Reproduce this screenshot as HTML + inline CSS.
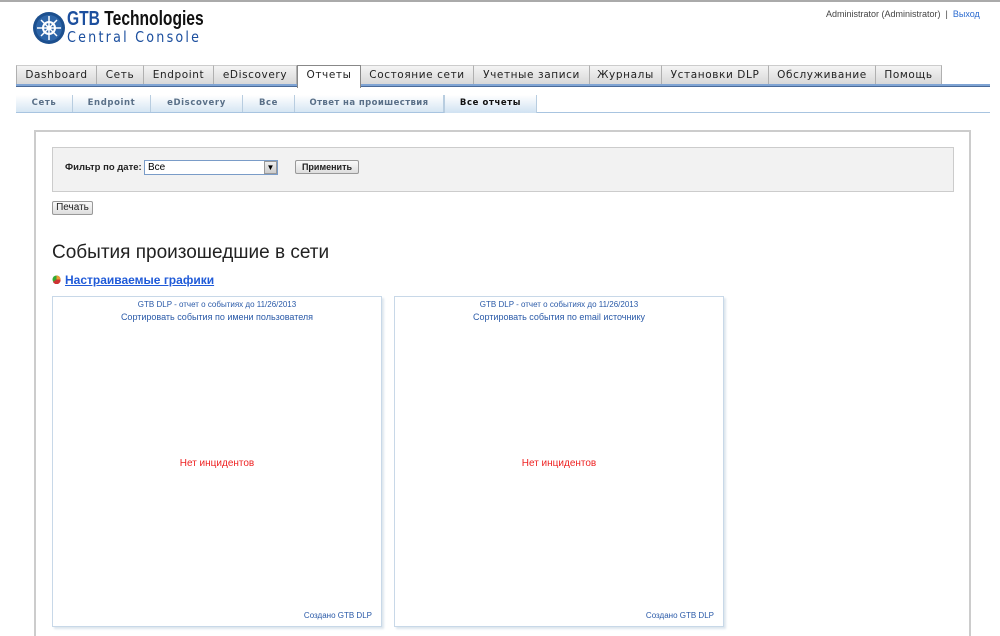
<!DOCTYPE html>
<html><head><meta charset="utf-8"><style>
*{margin:0;padding:0;box-sizing:border-box}
html,body{width:1000px;height:636px;overflow:hidden}
body{background:#fff;font-family:"Liberation Sans",sans-serif;position:relative}
.a{position:absolute}
.tab{position:absolute;top:65px;height:19px;background:linear-gradient(#f4f4f4,#d8d8d8);border-right:1px solid #b0b0b0;border-top:1px solid #ccc;font-family:"DejaVu Sans",sans-serif;font-size:10.5px;letter-spacing:.6px;color:#222;text-align:center;line-height:18px;white-space:nowrap;overflow:hidden}
.sub{position:absolute;top:95px;height:17px;background:linear-gradient(#fff,#d6e6f3);border-right:1px solid #b8cde0;font-family:"DejaVu Sans",sans-serif;font-size:8.5px;font-weight:bold;letter-spacing:.6px;color:#5a7088;text-align:center;line-height:17px;white-space:nowrap;overflow:hidden}
.btn{position:absolute;background:linear-gradient(#fafafa,#ddd);border:1px solid #999;border-radius:2px;font-size:10px;font-weight:bold;color:#222;text-align:center}
.chart{position:absolute;top:296px;width:330px;height:331px;border:1px solid #c8d8e8;box-shadow:2px 2px 2px #dde6ee;background:#fff;font-size:9px;color:#2a5aa8;text-align:center}
</style></head><body>
<div class="a" style="left:0;top:0;width:1000px;height:2px;background:#aaa"></div>
<svg class="a" style="left:32px;top:11px" width="34" height="34" viewBox="0 0 34 34"><circle cx="17" cy="17" r="16" fill="#1c4f8e"/><circle cx="17" cy="17" r="13" fill="#2d65a8"/><circle cx="17" cy="17" r="6" fill="none" stroke="#fff" stroke-width="2"/><g stroke="#fff" stroke-width="1.5"><line x1="17" y1="5" x2="17" y2="29"/><line x1="5" y1="17" x2="29" y2="17"/><line x1="9" y1="9" x2="25" y2="25"/><line x1="25" y1="9" x2="9" y2="25"/></g><circle cx="17" cy="17" r="2.5" fill="#fff"/></svg>
<div class="a" style="left:67px;top:8px;font-size:20px;font-weight:bold;transform:scaleX(.78);transform-origin:left;white-space:nowrap"><span style="color:#1c4f9e">GTB</span> <span style="color:#111">Technologies</span></div>
<div class="a" style="left:67px;top:28px;font-size:15px;color:#1c4f9e;letter-spacing:2.6px;font-family:'DejaVu Sans',sans-serif;transform:scaleX(.85);transform-origin:left;white-space:nowrap">Central Console</div>
<div class="a" style="left:826px;top:9px;font-size:9px;color:#444;white-space:nowrap">Administrator (Administrator) &nbsp;| &nbsp;<span style="color:#2b6bd0">Выход</span></div>
<div class="a" style="left:16px;top:84px;width:974px;height:3px;background:#7fa4d4;border-bottom:1px solid #4a6a98"></div>
<div class="tab" style="left:16px;width:81px;border-left:1px solid #b0b0b0">Dashboard</div>
<div class="tab" style="left:97px;width:47px">Сеть</div>
<div class="tab" style="left:144px;width:70px">Endpoint</div>
<div class="tab" style="left:214px;width:83px">eDiscovery</div>
<div class="tab" style="left:297px;width:64px;background:#fff;height:23px;border:1px solid #888;border-bottom:none">Отчеты</div>
<div class="tab" style="left:361px;width:113px">Состояние сети</div>
<div class="tab" style="left:474px;width:116px">Учетные записи</div>
<div class="tab" style="left:590px;width:72px">Журналы</div>
<div class="tab" style="left:662px;width:107px">Установки DLP</div>
<div class="tab" style="left:769px;width:107px">Обслуживание</div>
<div class="tab" style="left:876px;width:66px">Помощь</div>
<div class="a" style="left:16px;top:112px;width:974px;height:1px;background:#a8c4e0"></div>
<div class="sub" style="left:16px;width:57px">Сеть</div>
<div class="sub" style="left:73px;width:78px">Endpoint</div>
<div class="sub" style="left:151px;width:92px">eDiscovery</div>
<div class="sub" style="left:243px;width:52px">Все</div>
<div class="sub" style="left:295px;width:149px;letter-spacing:.4px">Ответ на проишествия</div>
<div class="sub" style="left:444px;width:93px;color:#111;background:linear-gradient(#fff,#d0e2f2);height:18px;border-left:1px solid #b8cde0">Все отчеты</div>
<div class="a" style="left:34px;top:130px;width:937px;height:520px;border:2px solid #ccc;border-bottom:none"></div>
<div class="a" style="left:52px;top:147px;width:902px;height:45px;background:#f2f2f2;border:1px solid #ccc"></div>
<div class="a" style="left:65px;top:162px;font-size:9.5px;font-weight:bold;color:#222;white-space:nowrap">Фильтр по дате:</div>
<div class="a" style="left:144px;top:160px;width:134px;height:15px;border:1px solid #7a9cc8;background:#fff;font-size:10px;padding-left:3px;line-height:13px">Все</div>
<div class="a" style="left:264px;top:161px;width:13px;height:13px;background:linear-gradient(#eee,#ccc);border:1px solid #999;font-size:8px;text-align:center;line-height:12px">&#9660;</div>
<div class="btn" style="left:295px;top:160px;width:64px;height:14px;line-height:12px;font-size:9px">Применить</div>
<div class="btn" style="left:52px;top:201px;width:41px;height:14px;line-height:12px;font-weight:normal">Печать</div>
<div class="a" style="left:52px;top:242px;font-size:19px;color:#222;white-space:nowrap">События произошедшие в сети</div>
<svg class="a" style="left:52px;top:275px" width="9" height="9"><circle cx="4.5" cy="4.5" r="4" fill="#3a3"/><path d="M4.5 4.5L4.5 .5A4 4 0 0 1 8.5 4.5Z" fill="#e93"/><path d="M4.5 4.5L8.5 4.5A4 4 0 0 1 1 7Z" fill="#c33"/></svg>
<div class="a" style="left:65px;top:273px;font-size:12px;font-weight:bold;color:#1f5ad8;text-decoration:underline;white-space:nowrap">Настраиваемые графики</div>
<div class="chart" style="left:52px"><div style="margin-top:3px;font-size:8px">GTB DLP - отчет о событиях до 11/26/2013</div><div style="margin-top:3px">Сортировать события по имени пользователя</div><div style="position:absolute;top:161px;width:100%;color:#e22;font-size:10px">Нет инцидентов</div><div style="position:absolute;right:9px;bottom:6px;font-size:8px">Создано GTB DLP</div></div>
<div class="chart" style="left:394px"><div style="margin-top:3px;font-size:8px">GTB DLP - отчет о событиях до 11/26/2013</div><div style="margin-top:3px">Сортировать события по email источнику</div><div style="position:absolute;top:161px;width:100%;color:#e22;font-size:10px">Нет инцидентов</div><div style="position:absolute;right:9px;bottom:6px;font-size:8px">Создано GTB DLP</div></div>
</body></html>
